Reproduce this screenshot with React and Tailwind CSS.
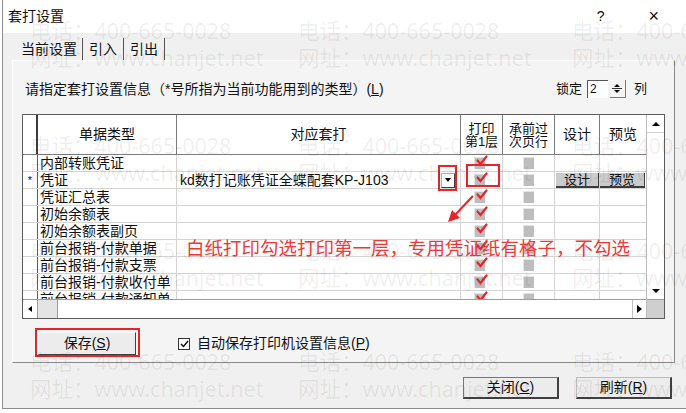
import React from "react";

const rows = [
  "内部转账凭证",
  "凭证",
  "凭证汇总表",
  "初始余额表",
  "初始余额表副页",
  "前台报销-付款单据",
  "前台报销-付款支票",
  "前台报销-付款收付单",
  "前台报销-付款通知单",
];

const marks = [
  { x: 30, y: 18 },
  { x: 298, y: 18 },
  { x: 572, y: 18 },
  { x: 30, y: 133 },
  { x: 298, y: 133 },
  { x: 572, y: 133 },
  { x: 30, y: 238 },
  { x: 298, y: 238 },
  { x: 572, y: 238 },
  { x: 30, y: 349 },
  { x: 298, y: 349 },
  { x: 572, y: 349 },
];

function Check() {
  return (
    <svg width="12" height="11" viewBox="0 0 12 11" className="absolute left-[1px] -top-[3px]">
      <path d="M1.5 5.5 L4.5 9 L10.5 1.5" fill="none" stroke="#e3262b" strokeWidth="2.2" strokeLinecap="round" />
    </svg>
  );
}

function Box({ checked }) {
  return (
    <div className="relative w-[11px] h-[12px] bg-[#bdbdbd] border-t border-l border-[#e4e4e4] border-r-[#6e6e6e] border-b-[#6e6e6e]">
      {checked && <Check />}
    </div>
  );
}

function Row({ name, idx }) {
  const main = idx === 1;
  return (
    <div className="flex h-[17px] border-b border-[#d4d4d4] bg-white">
      <div className="w-[15px] shrink-0 border-r border-[#5c5c5c] text-[11px] leading-[17px] text-center">
        {main ? "*" : ""}
      </div>
      <div className="w-[139px] shrink-0 border-r border-[#d4d4d4] pl-[2px] text-[14px] leading-[16px] whitespace-nowrap overflow-hidden text-[#111]">
        {name}
      </div>
      <div className="w-[284px] shrink-0 border-r border-[#d4d4d4] flex items-center pl-[3px] text-[14px] leading-[16px] text-[#111]">
        {main && (
          <>
            <span className="flex-1 whitespace-nowrap">kd数打记账凭证全蝶配套KP-J103</span>
            <span className="w-[14px] h-[15px] mr-[5px] bg-white border border-[#b0b0b0] border-b-[#404040] border-r-[#404040] flex items-center justify-center">
              <span className="w-0 h-0 border-l-[3px] border-r-[3px] border-t-[4px] border-l-transparent border-r-transparent border-t-black" />
            </span>
          </>
        )}
      </div>
      <div className="w-[42px] shrink-0 border-r border-[#d4d4d4] flex items-center justify-center pr-[4px]">
        <Box checked />
      </div>
      <div className="w-[52px] shrink-0 border-r border-[#d4d4d4] flex items-center justify-center">
        <Box />
      </div>
      <div className="w-[45px] shrink-0 border-r border-[#d4d4d4] flex items-center">
        {main && (
          <div className="w-[43px] h-[15px] ml-[1px] bg-[#cbcbcb] border-b-2 border-r border-[#3c3c3c] text-[13px] leading-[13px] text-center">
            设计
          </div>
        )}
      </div>
      <div className="w-[46px] shrink-0 flex items-center">
        {main && (
          <div className="w-[45px] h-[15px] bg-[#cbcbcb] border-b-2 border-r border-[#3c3c3c] text-[13px] leading-[13px] text-center">
            预览
          </div>
        )}
      </div>
    </div>
  );
}

function Grid() {
  return (
    <div className="ml-[9px] mt-[16px] w-[643px] h-[205px] border border-[#5c5c5c] flex bg-white">
      <div className="w-[623px] flex flex-col">
        <div className="flex h-[40px] border-b border-[#7c7c7c] text-[13px] text-[#111]">
          <div className="w-[15px] border-r-2 border-[#3c3c3c]" />
          <div className="w-[139px] border-r border-[#7c7c7c] flex items-center justify-center text-[14px]">单据类型</div>
          <div className="w-[284px] border-r border-[#7c7c7c] flex items-center justify-center text-[14px]">对应套打</div>
          <div className="w-[42px] border-r border-[#7c7c7c] flex items-center justify-center text-center leading-[13px]">
            打印<br />第1层
          </div>
          <div className="w-[52px] border-r border-[#7c7c7c] flex items-center justify-center text-center leading-[13px]">
            承前过<br />次页行
          </div>
          <div className="w-[45px] border-r border-[#7c7c7c] flex items-center justify-center text-[14px]">设计</div>
          <div className="w-[46px] flex items-center justify-center text-[14px]">预览</div>
        </div>
        <div className="h-[144px] overflow-hidden">
          {rows.map((r, i) => (
            <Row key={r} name={r} idx={i} />
          ))}
        </div>
        <div className="h-[19px] border-t border-[#9c9c9c] flex">
          <div className="w-[15px] border-r border-[#9c9c9c] flex items-center justify-center">
            <span className="w-0 h-0 border-t-[3px] border-b-[3px] border-r-[4px] border-t-transparent border-b-transparent border-r-black" />
          </div>
          <div className="w-[20px] bg-[#e4e4e4] border-r border-[#9c9c9c]" />
          <div className="flex-1" />
          <div className="w-[14px] border-l border-[#c0c0c0] flex items-center justify-center">
            <span className="w-0 h-0 border-t-[4px] border-b-[4px] border-l-[5px] border-t-transparent border-b-transparent border-l-black" />
          </div>
        </div>
      </div>
      <div className="w-[18px] border-l border-[#bcbcbc] flex flex-col">
        <div className="h-[18px] border-b border-[#d0d0d0] flex items-center justify-center">
          <span className="w-0 h-0 border-l-[4px] border-r-[4px] border-b-[4px] border-l-transparent border-r-transparent border-b-black" />
        </div>
        <div className="flex-1" />
        <div className="h-[17px] flex items-center justify-center">
          <span className="w-0 h-0 border-l-[4px] border-r-[4px] border-t-[4px] border-l-transparent border-r-transparent border-t-black" />
        </div>
        <div className="h-[19px] bg-[#cfcfcf] border-t border-[#9c9c9c]" />
      </div>
    </div>
  );
}

export default function App() {
  return (
    <div className="relative w-[686px] h-[413px] overflow-hidden bg-white font-['Liberation_Sans','Noto_Sans_CJK_SC',sans-serif] text-[#111]">
      <div className="ml-[2px] h-[409px] border-l border-b border-[#8c8c8c] flex flex-col">
        <div className="h-[33px] bg-white flex items-center justify-between pl-[5px] pr-[27px] text-[14px]">
          <span>套打设置</span>
          <div className="flex items-center gap-[44px]">
            <span className="text-[14px]">?</span>
            <span className="text-[18px] font-light">×</span>
          </div>
        </div>
        <div className="flex-1 bg-[#f0f0f0] flex flex-col">
          <div className="mt-[5px] h-[22px] pl-[15px] flex items-stretch text-[14px]">
            <div className="pl-[3px] pr-[5px] border-r border-[#555] flex items-center">当前设置</div>
            <div className="px-[6px] border-r border-[#555] flex items-center">引入</div>
            <div className="px-[6px] border-r border-[#555] flex items-center">引出</div>
          </div>
          <div className="ml-[9px] w-[663px] h-[303px] bg-[#f4f4f4] border-t border-l border-white border-r border-b border-r-[#8a8a8a] border-b-[#8a8a8a] flex flex-col">
            <div className="mt-[19px] h-[18px] flex items-center justify-between pl-[12px] pr-[27px] text-[14px]">
              <span>
                请指定套打设置信息（*号所指为当前功能用到的类型）(<span className="underline">L</span>)
              </span>
              <div className="flex items-center text-[13px]">
                <span>锁定</span>
                <div className="ml-[5px] w-[21px] h-[18px] bg-white border-t border-l border-[#555] text-[12px] leading-[16px] pl-[2px]">2</div>
                <div className="ml-[2px] w-[16px] h-[18px] flex flex-col items-center justify-center gap-[1px] border-r border-b border-[#777]">
                  <span className="w-0 h-0 border-l-[3px] border-r-[3px] border-b-[3px] border-l-transparent border-r-transparent border-b-black" />
                  <span className="w-[10px] h-px bg-[#333]" />
                  <span className="w-0 h-0 border-l-[3px] border-r-[3px] border-t-[3px] border-l-transparent border-r-transparent border-t-black" />
                </div>
                <span className="ml-[8px]">列</span>
              </div>
            </div>
            <Grid />
            <div className="mt-[13px] flex items-center">
              <div className="ml-[25px] w-[98px] h-[23px] bg-[#ececec] border-t border-l border-white border-r border-b border-r-[#404040] border-b-[#404040] flex items-center justify-center text-[14px]">
                保存(<span className="underline">S</span>)
              </div>
              <div className="ml-[42px] w-[12px] h-[12px] bg-white border border-[#333] flex items-center justify-center">
                <svg width="9" height="8" viewBox="0 0 9 8">
                  <path d="M1 4 L3.5 6.5 L8 1" fill="none" stroke="#111" strokeWidth="1.5" />
                </svg>
              </div>
              <span className="ml-[7px] text-[14px]">
                自动保存打印机设置信息(<span className="underline">P</span>)
              </span>
            </div>
          </div>
          <div className="mt-[14px] flex justify-end pr-[14px] gap-[17px] text-[14px]">
            <div className="w-[96px] h-[22px] bg-[#ececec] border border-[#777] border-r-2 border-b-2 border-r-[#404040] border-b-[#404040] flex items-center justify-center">
              关闭(<span className="underline">C</span>)
            </div>
            <div className="w-[96px] h-[22px] bg-[#ececec] border border-[#bbb] border-r-2 border-b-2 border-r-[#404040] border-b-[#404040] flex items-center justify-center">
              刷新(<span className="underline">R</span>)
            </div>
          </div>
        </div>
      </div>

      {/* red annotations */}
      <div className="absolute left-[438px] top-[165px] w-[19px] h-[26px] border-2 border-[#e3262b]" />
      <div className="absolute left-[466px] top-[164px] w-[34px] h-[23px] border-2 border-[#e3262b]" />
      <svg className="absolute left-[444px] top-[193px]" width="34" height="32" viewBox="0 0 34 32">
        <path d="M29 3 L10 23" stroke="#e3262b" strokeWidth="2" />
        <path d="M4 29 L8 17 L16 25 Z" fill="#e3262b" />
      </svg>
      <div className="absolute left-[186px] top-[235px] text-[18.5px] leading-[24px] text-[#ee3a3a] whitespace-nowrap font-['Noto_Sans_CJK_SC',sans-serif]">
        白纸打印勾选打印第一层，专用凭证纸有格子，不勾选
      </div>
      <div className="absolute left-[35px] top-[328px] w-[105px] h-[29px] border-2 border-[#e3262b]" />

      {/* watermark */}
      <div className="absolute inset-0 pointer-events-none">
        {marks.map((m, i) => (
          <div
            key={i}
            className="absolute text-[21.5px] leading-[26px] text-black/[0.07] whitespace-nowrap font-['Noto_Sans','Noto_Sans_CJK_SC',sans-serif]"
            style={{ left: m.x, top: m.y }}
          >
            <div>电话：400-665-0028</div>
            <div className="mt-[1px]">网址：www.chanjet.net</div>
          </div>
        ))}
      </div>
    </div>
  );
}
